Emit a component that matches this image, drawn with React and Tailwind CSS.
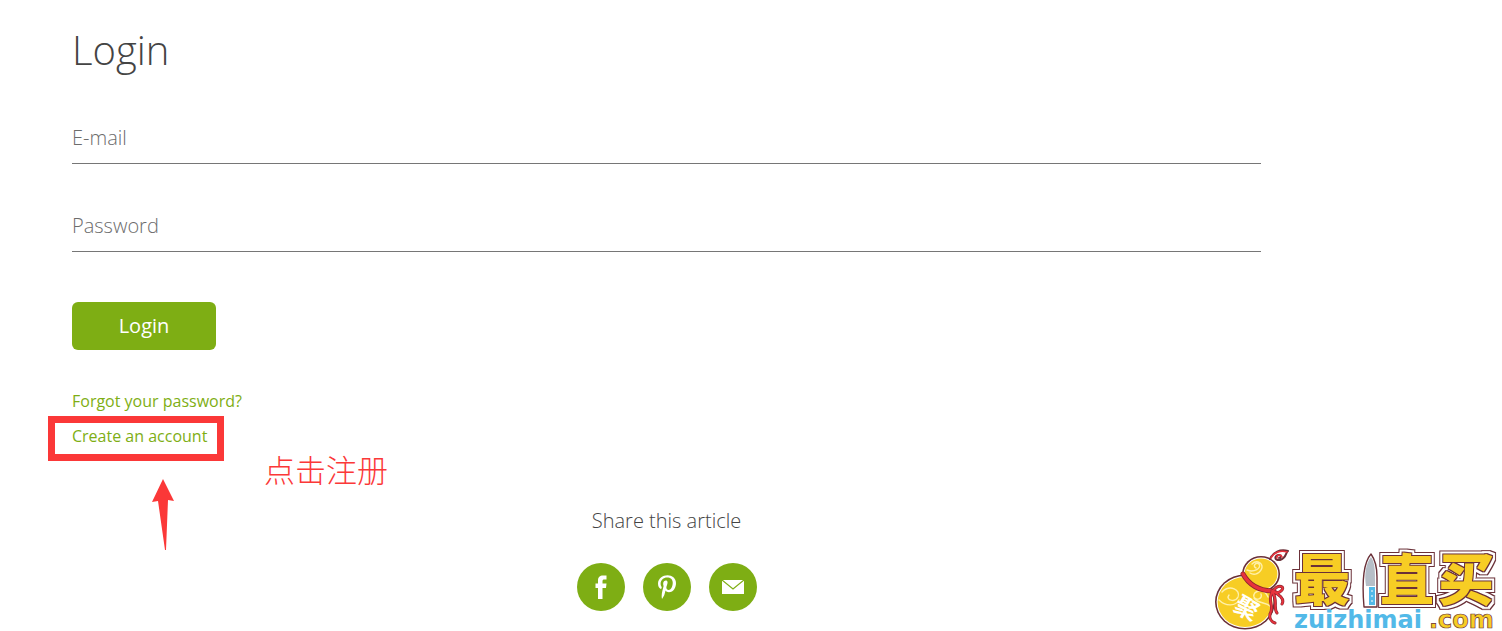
import { FaPinterestP } from "react-icons/fa";

const shareLinks = [
  {
    name: "Facebook",
    icon: (
      <svg viewBox="0 0 12 24" className="h-6 w-3" aria-hidden="true">
        <path d="M3 24V13H0.5V8.5H3V5.5C3 2 4.8 0.5 8 0.5H11.5V4.5H9.3C8 4.5 7.5 5 7.5 6.2V8.5H11.5L11 13H7.5V24Z" fill="white" />
      </svg>
    ),
  },
  { name: "Pinterest", icon: <FaPinterestP className="size-6" /> },
  {
    name: "E-mail",
    icon: (
      <svg viewBox="0 0 22 14" className="h-[14px] w-[22px]" aria-hidden="true">
        <path d="M0 0H22V14H0Z" fill="white" />
        <path d="M0 0L11 9L22 0" fill="none" stroke="#7eae14" strokeWidth="1.2" />
      </svg>
    ),
  },
];

function Field({ id, type, label }) {
  return (
    <div className="border-b border-[#767676]">
      <input
        id={id}
        type={type}
        aria-label={label}
        placeholder={label}
        className="block h-[51px] w-full bg-transparent text-xl font-light text-[#444] outline-none placeholder:text-[#6c6c6c]"
      />
    </div>
  );
}

function BrandLogo() {
  return (
    <svg
      viewBox="1212 541 290 90"
      className="absolute right-0 bottom-0 h-[90px] w-[290px] font-['Noto_Sans_CJK_SC',sans-serif]"
      role="img"
      aria-label="最值买 zuizhimai.com"
    >
      <defs>
        <filter id="rings" filterUnits="userSpaceOnUse" x="1212" y="541" width="290" height="90" colorInterpolationFilters="sRGB">
          <feMorphology in="SourceAlpha" operator="dilate" radius="4" result="outer" />
          <feMorphology in="SourceAlpha" operator="dilate" radius="3" result="middle" />
          <feMorphology in="SourceAlpha" operator="dilate" radius="1" result="inner" />
          <feFlood floodColor="#6a3038" result="maroon" />
          <feFlood floodColor="#ffffff" result="white" />
          <feComposite in="maroon" in2="outer" operator="in" result="outerRing" />
          <feComposite in="white" in2="middle" operator="in" result="whiteRing" />
          <feComposite in="maroon" in2="inner" operator="in" result="innerRing" />
          <feMerge>
            <feMergeNode in="outerRing" />
            <feMergeNode in="whiteRing" />
            <feMergeNode in="innerRing" />
            <feMergeNode in="SourceGraphic" />
          </feMerge>
        </filter>
      </defs>
      <g strokeLinecap="round" strokeLinejoin="round">
        <g fill="#6a3038">
          <ellipse cx="1245" cy="602" rx="30" ry="27.5" />
          <ellipse cx="1261" cy="574" rx="19" ry="18" />
        </g>
        <g fill="white">
          <ellipse cx="1245" cy="602" rx="28.4" ry="26" />
          <ellipse cx="1261" cy="574" rx="17.4" ry="16.4" />
        </g>
        <g fill="#f7cd24">
          <ellipse cx="1245" cy="602" rx="27.4" ry="25" />
          <ellipse cx="1261" cy="574" rx="16.4" ry="15.4" />
        </g>
        <path d="M1270 559C1273 552 1280 549 1288 551C1285 553 1287 558 1280 560C1274 561 1274 555 1279 555C1282 555 1281 558 1279 558" fill="white" stroke="#6a3038" strokeWidth="2" />
        <path d="M1271 558C1274 552 1281 550 1287 552M1277 558C1276 555 1281 554 1282 557" fill="none" stroke="#e8323c" strokeWidth="1.6" />
        <g fill="none" stroke="#fff0a8" strokeWidth="1.4">
          <path d="M1247 570C1254 573 1262 568 1259 564C1256 562 1252 566 1256 568M1252 564C1257 559 1265 564 1261 570C1258 575 1253 575 1250 573" />
          <path d="M1222 592C1230 584 1241 590 1238 597C1235 603 1225 600 1229 595M1219 600C1226 607 1236 606 1239 600M1268 597C1264 587 1252 591 1254 597C1256 601 1263 599 1261 594M1254 598C1258 604 1266 602 1270 606" />
        </g>
        <path d="M1243 574C1249 585 1260 591 1274 591" fill="none" stroke="#8d2730" strokeWidth="5" />
        <path d="M1243 574C1249 585 1260 591 1274 591" fill="none" stroke="#e8323c" strokeWidth="3.4" />
        <path d="M1273 591C1279 583 1286 587 1281 591C1278 594 1275 592 1272 591C1279 594 1285 599 1282 604M1272 592C1267 603 1275 605 1270 614C1269 619 1272 622 1275 623M1273 593C1278 601 1273 608 1277 613" fill="none" stroke="#8d2730" strokeWidth="3" />
        <path d="M1273 591C1279 583 1286 587 1281 591C1278 594 1275 592 1272 591C1279 594 1285 599 1282 604M1272 592C1267 603 1275 605 1270 614C1269 619 1272 622 1275 623M1273 593C1278 601 1273 608 1277 613" fill="none" stroke="#e8323c" strokeWidth="1.8" />
      </g>
      <text x="1235" y="617" fontSize="24" fontWeight="700" fill="white" transform="rotate(30 1247 608)">聚</text>
      <g filter="url(#rings)" fill="#f7cd24" fontWeight="900">
        <text x="1294" y="600" fontSize="56">最</text>
        <text x="1380" y="600" fontSize="54">直</text>
        <text x="1438" y="600" fontSize="56">买</text>
      </g>
      <path d="M1364 607C1362 584 1363 563 1371 554C1376 561 1377 569 1377 577V607Z" fill="white" stroke="#6a3038" strokeWidth="1.4" strokeLinejoin="round" />
      <path d="M1366 586C1364 574 1366 563 1371 557C1375 563 1375 570 1375 586Z" fill="#b6bec7" />
      <path d="M1369 587H1375V605H1369Z" fill="#52b9e8" />
      <path d="M1371 591H1373M1371 596H1373M1371 601H1373" stroke="white" />
      <g className="font-['DejaVu_Sans',sans-serif]" fontSize="24" fontWeight="700">
        <text x="1294" y="628" fill="#52b9e8">zuizhimai</text>
        <text x="1429" y="628" fill="#f7cd24" stroke="#6a3038" strokeWidth="0.7">.com</text>
      </g>
    </svg>
  );
}

export default function App() {
  return (
    <div className="relative bg-white pt-5 pr-[241px] pb-5 pl-[72px] font-['Open_Sans',sans-serif] font-light text-[#444]">
      <main>
        <h1 className="text-[40px] leading-[60px] font-light">Login</h1>
        <form className="mt-8" onSubmit={(e) => e.preventDefault()}>
          <div className="flex flex-col gap-9">
            <Field id="email" type="email" label="E-mail" />
            <Field id="password" type="password" label="Password" />
          </div>
          <button type="submit" className="mt-[50px] block h-12 w-36 rounded-md bg-[#7eae14] text-xl font-normal text-white">
            Login
          </button>
        </form>
        <nav className="mt-[39px] flex flex-col items-start gap-[11px] text-base leading-6 font-normal text-[#7eae14]">
          <a href="#forgot">Forgot your password?</a>
          <div className="relative">
            <a href="#register">Create an account</a>
            <div className="pointer-events-none absolute -top-2 -left-6 h-[45px] w-44 border-[7px] border-[#fb3838]" />
            <svg viewBox="0 0 22 71" className="absolute top-[55px] left-20 h-[71px] w-[22px]" aria-hidden="true">
              <path d="M11 0L22 22L16 21L14 71H13L6 22L0 23Z" fill="#fb3838" />
            </svg>
            <p className="absolute top-[25px] left-48 font-['Noto_Sans_CJK_SC',sans-serif] text-[31px] leading-10 font-light whitespace-nowrap text-[#fb3838]">
              点击注册
            </p>
          </div>
        </nav>
      </main>
      <section className="mt-[57px] flex flex-col items-center">
        <h2 className="text-xl leading-8 font-light">Share this article</h2>
        <div className="mt-[26px] flex gap-[18px]">
          {shareLinks.map(({ name, icon }) => (
            <a key={name} href="#share" aria-label={name} className="flex size-12 items-center justify-center rounded-full bg-[#7eae14] text-white">
              {icon}
            </a>
          ))}
        </div>
      </section>
      <BrandLogo />
    </div>
  );
}
